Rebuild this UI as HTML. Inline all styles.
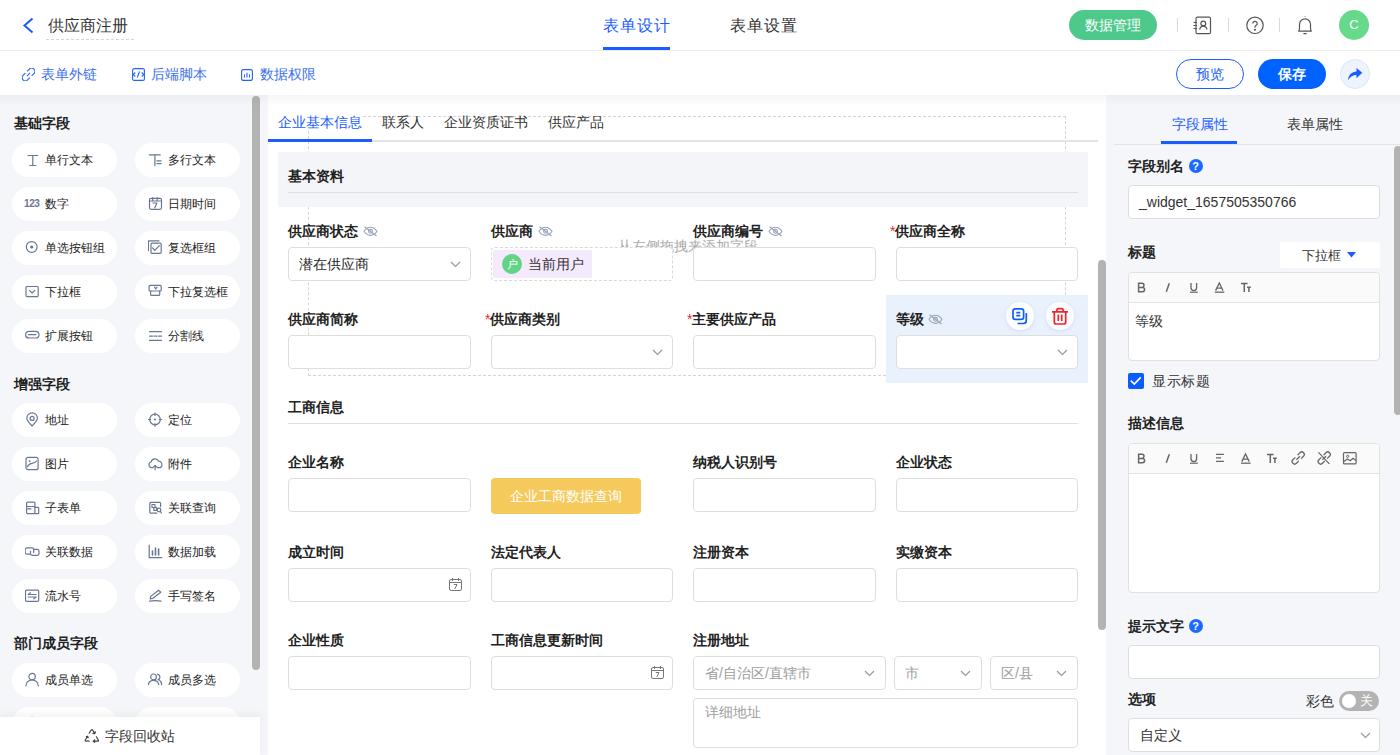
<!DOCTYPE html>
<html><head><meta charset="utf-8">
<style>
*{box-sizing:border-box;margin:0;padding:0}
html,body{width:1400px;height:755px;overflow:hidden;background:#fff;font-family:"Liberation Sans",sans-serif;color:#333;font-size:14px}
.a{position:absolute}
svg{display:block}
/* header */
#hdr{position:absolute;left:0;top:0;width:1400px;height:51px;background:#fff;border-bottom:1px solid #ececec}
#bar{position:absolute;left:0;top:51px;width:1400px;height:44px;background:#fff}
#shadow{position:absolute;left:0;top:95px;width:1400px;height:11px;background:linear-gradient(rgba(0,0,0,0.035),rgba(0,0,0,0));z-index:5}
.tl{font-size:16px;line-height:16px;white-space:nowrap}
.bl{color:#3a6ff0}
/* left */
#left{position:absolute;left:0;top:95px;width:268px;height:660px;background:#f5f6fa}
.h{position:absolute;left:14px;font-size:14px;font-weight:bold;color:#1f1f1f;line-height:14px}
.chip{position:absolute;width:105px;height:34px;border-radius:17px;background:#fff;font-size:12px;color:#222;line-height:35px;padding-left:33px;white-space:nowrap}
.chip svg{position:absolute;left:13px;top:9px}
/* center */
#center{position:absolute;left:268px;top:95px;width:838px;height:660px;background:#fff}
.lab{position:absolute;font-size:14px;font-weight:bold;color:#222;line-height:14px;white-space:nowrap}
.req{color:#f5222d;font-weight:normal}
.inp{position:absolute;height:34px;border:1px solid #dedede;border-radius:4px;background:#fff}
.ph{position:absolute;font-size:14px;color:#9d9d9d;line-height:14px;white-space:nowrap}
/* right */
#right{position:absolute;left:1106px;top:95px;width:294px;height:660px;background:#f5f6fa}
.sb{position:absolute;width:8px;border-radius:4px;background:#b3b3b3}
</style></head>
<body>
<div id="hdr">
  <svg class="a" style="left:22px;top:17px" width="13" height="17" viewBox="0 0 13 17"><path d="M10.5 1.5 L2.5 8.5 L10.5 15.5" fill="none" stroke="#1a5cff" stroke-width="2"/></svg>
  <div class="a tl" style="left:48px;top:18px;color:#333">供应商注册</div>
  <div class="a" style="left:46px;top:39px;width:88px;border-top:1px dashed #d6d6d6"></div>
  <div class="a tl" style="left:603px;top:18px;letter-spacing:1px;color:#1a5cff">表单设计</div>
  <div class="a" style="left:603px;top:47px;width:67px;height:3px;background:#1a5cff"></div>
  <div class="a tl" style="left:730px;top:18px;letter-spacing:1px;color:#333">表单设置</div>
  <div class="a" style="left:1069px;top:10px;width:88px;height:30px;border-radius:15px;background:#4cc98b;color:#fff;font-size:14px;line-height:30px;text-align:center">数据管理</div>
  <div class="a" style="left:1177px;top:18px;width:1px;height:14px;background:#d9d9d9"></div>
  <div class="a" style="left:1228px;top:18px;width:1px;height:14px;background:#d9d9d9"></div>
  <div class="a" style="left:1279px;top:18px;width:1px;height:14px;background:#d9d9d9"></div>
  
  <svg class="a" style="left:1192px;top:16px" width="20" height="19" viewBox="0 0 20 19" fill="none" stroke="#555" stroke-width="1.2"><rect x="4" y="1.2" width="14.5" height="16.5" rx="1.5"/><path d="M1.5 6.5h3.5M1.5 9.5h3.5M1.5 12.5h3.5"/><circle cx="11.3" cy="7.5" r="2.4"/><path d="M7.6 13.5c.5-2.2 1.8-3.4 3.7-3.4s3.2 1.2 3.7 3.4"/></svg>
  <svg class="a" style="left:1245px;top:16px" width="20" height="19" viewBox="0 0 20 19" fill="none" stroke="#555" stroke-width="1.2"><circle cx="10" cy="9.3" r="8.2"/><path d="M7.8 7.5a2.2 2.2 0 1 1 3.1 2c-.6.3-.9.8-.9 1.5v.7"/><circle cx="10" cy="13.8" r=".45" fill="#555"/></svg>
  <svg class="a" style="left:1296px;top:16px" width="18" height="20" viewBox="0 0 18 20" fill="none" stroke="#555" stroke-width="1.2"><path d="M9 0.6v.4M2.2 15.2h13.6M2.5 15.2c.8-.6 1-1.5 1-3V8.2a5.5 5.3 0 0 1 11 0v4c0 1.5.2 2.4 1 3M7.4 17.6h3.2"/></svg>
  <div class="a" style="left:1339px;top:10px;width:30px;height:30px;border-radius:15px;background:#66d98a;color:#fff;font-size:13px;line-height:30px;text-align:center">C</div>
</div>
<div id="bar">

  <svg class="a" style="left:22px;top:67.5px;top:16.5px" width="13" height="13" viewBox="0 0 13 13" fill="none" stroke="#2563f6" stroke-width="1.1"><g transform="rotate(-45 6.5 6.5)"><path d="M5.3 3.3H2a3.2 3.2 0 0 0 0 6.4h3.3M7.7 3.3H11a3.2 3.2 0 0 1 0 6.4H7.7M4.3 6.5h4.4"/></g></svg>
  <svg class="a" style="left:132px;top:17px" width="13" height="13" viewBox="0 0 13 13" fill="none" stroke="#2563f6" stroke-width="1.1"><rect x="0.6" y="0.6" width="11.8" height="11.8" rx="1.5"/><path d="M3.3 4.5L1.2 6.5 3.3 8.5M9.7 4.5l2.1 2-2.1 2M7.5 3.5L5.3 9.5"/></svg>
  <svg class="a" style="left:241px;top:18px" width="12" height="12" viewBox="0 0 12 12" fill="none" stroke="#2563f6" stroke-width="1.1"><rect x="0.6" y="0.6" width="10.8" height="10.8" rx="2"/><path d="M3.5 5.5v3M6 3.8v4.7M8.5 5.5v3"/></svg>
  <div class="a bl" style="left:41px;top:16px;font-size:14px;line-height:14px">表单外链</div>
  <div class="a bl" style="left:151px;top:16px;font-size:14px;line-height:14px">后端脚本</div>
  <div class="a bl" style="left:260px;top:16px;font-size:14px;line-height:14px">数据权限</div>
  <div class="a" style="left:1176px;top:8px;width:68px;height:30px;border-radius:15px;border:1px solid #1a5cff;color:#1a5cff;font-size:14px;line-height:28px;text-align:center">预览</div>
  <div class="a" style="left:1258px;top:8px;width:68px;height:30px;border-radius:15px;background:#0062ff;color:#fff;font-size:14px;line-height:30px;text-align:center;font-weight:bold">保存</div>
  <div class="a" style="left:1340px;top:8px;width:30px;height:30px;border-radius:15px;background:#eef4ff;border:1px solid #dbe6fc"><svg class="a" style="left:6px;top:6.6px" width="16" height="14" viewBox="0 0 16 14"><path d="M1 13.2C1.6 7.5 4.8 5 9.5 4.6V1L15.3 5.8 9.5 11.2V8C6 8 3.3 9.5 1 13.2Z" fill="#1a5cff"/></svg></div>
</div>

<div id="left">
<div class="h" style="top:21px">基础字段</div>
<div class="chip" style="left:12px;top:48px"><svg width="16" height="16" viewBox="0 0 16 16" fill="none" stroke="#6a7793" stroke-width="1.2" stroke-linecap="round" stroke-linejoin="round"><path d="M3 3.5h9.8M7.8 3.5v10M4.9 13.5h6"/></svg>单行文本</div>
<div class="chip" style="left:135px;top:48px"><svg width="16" height="16" viewBox="0 0 16 16" fill="none" stroke="#6a7793" stroke-width="1.2" stroke-linecap="round" stroke-linejoin="round"><path d="M1.3 2.8h11M6.9 2.8v11M8.9 8.9h4.2M8.9 11.6h4.2"/></svg>多行文本</div>
<div class="chip" style="left:12px;top:92px"><span style="position:absolute;left:12px;top:-1px;font-size:10px;font-weight:bold;color:#6a7793;letter-spacing:-0.4px">123</span>数字</div>
<div class="chip" style="left:135px;top:92px"><svg width="16" height="16" viewBox="0 0 16 16" fill="none" stroke="#6a7793" stroke-width="1.2" stroke-linecap="round" stroke-linejoin="round"><rect x="1.5" y="2.4" width="12" height="10.9" rx="1.5"/><path d="M1.5 5h12M4.7 1.5v3M9.2 1.5v3M4.9 7h4L6.7 12"/></svg>日期时间</div>
<div class="chip" style="left:12px;top:136px"><svg width="16" height="16" viewBox="0 0 16 16" fill="none" stroke="#6a7793" stroke-width="1.2" stroke-linecap="round" stroke-linejoin="round"><circle cx="6.7" cy="7" r="5.4"/><circle cx="6.7" cy="7" r="1.6" fill="#6a7793" stroke="none"/></svg>单选按钮组</div>
<div class="chip" style="left:135px;top:136px"><svg width="16" height="16" viewBox="0 0 16 16" fill="none" stroke="#6a7793" stroke-width="1.2" stroke-linecap="round" stroke-linejoin="round"><path d="M0.4 10.7V0.9h10.6"/><rect x="3" y="3.2" width="10.2" height="10.2" rx="1.2"/><path d="M4.6 8l2.3 2.3 4.4-4.6"/></svg>复选框组</div>
<div class="chip" style="left:12px;top:180px"><svg width="16" height="16" viewBox="0 0 16 16" fill="none" stroke="#6a7793" stroke-width="1.2" stroke-linecap="round" stroke-linejoin="round"><rect x="1" y="2.5" width="12.2" height="10.1" rx="1"/><path d="M4.4 6.3l2.7 2.7 2.7-2.7"/></svg>下拉框</div>
<div class="chip" style="left:135px;top:180px"><svg width="16" height="16" viewBox="0 0 16 16" fill="none" stroke="#6a7793" stroke-width="1.2" stroke-linecap="round" stroke-linejoin="round"><rect x="1.1" y="1.4" width="12.1" height="5.6" rx="1"/><path d="M2.6 7v3.4a1 1 0 0 0 1 1h7.1a1 1 0 0 0 1-1V7M6.6 3.2l1.2 1.6 1.2-1.6"/></svg>下拉复选框</div>
<div class="chip" style="left:12px;top:224px"><svg width="16" height="16" viewBox="0 0 16 16" fill="none" stroke="#6a7793" stroke-width="1.2" stroke-linecap="round" stroke-linejoin="round"><rect x="0.6" y="3.3" width="13.4" height="6.7" rx="3.35"/><path d="M3.5 6.65h7.2"/></svg>扩展按钮</div>
<div class="chip" style="left:135px;top:224px"><svg width="16" height="16" viewBox="0 0 16 16" fill="none" stroke="#6a7793" stroke-width="1.2" stroke-linecap="round" stroke-linejoin="round"><path d="M1.5 3.7h12M1.5 8.1h3M6 8.1h3M10.5 8.1h3M1.5 12.4h12"/></svg>分割线</div>
<div class="h" style="top:282px">增强字段</div>
<div class="chip" style="left:12px;top:308px"><svg width="16" height="16" viewBox="0 0 16 16" fill="none" stroke="#6a7793" stroke-width="1.2" stroke-linecap="round" stroke-linejoin="round"><path d="M7.1 14C3.6 10.6 1.8 8.2 1.8 6.1a5.3 5.3 0 0 1 10.6 0c0 2.1-1.8 4.5-5.3 7.9z"/><circle cx="7.1" cy="6.4" r="2"/></svg>地址</div>
<div class="chip" style="left:135px;top:308px"><svg width="16" height="16" viewBox="0 0 16 16" fill="none" stroke="#6a7793" stroke-width="1.2" stroke-linecap="round" stroke-linejoin="round"><circle cx="7" cy="7.5" r="5.3"/><circle cx="7" cy="7.5" r="1.1" fill="#6a7793" stroke="none"/><path d="M7 0.9v2.6M7 11.6v2.6M0.3 7.5h2.4M11.3 7.5h2.5"/></svg>定位</div>
<div class="chip" style="left:12px;top:352px"><svg width="16" height="16" viewBox="0 0 16 16" fill="none" stroke="#6a7793" stroke-width="1.2" stroke-linecap="round" stroke-linejoin="round"><rect x="1" y="1.4" width="12.1" height="12.3" rx="2"/><circle cx="4.6" cy="5.2" r="0.9" fill="#6a7793" stroke="none"/><path d="M2.3 10.8c1.2-2.5 2.6-3.3 4.6-3.5s3.6-.6 4.7-2.3"/></svg>图片</div>
<div class="chip" style="left:135px;top:352px"><svg width="16" height="16" viewBox="0 0 16 16" fill="none" stroke="#6a7793" stroke-width="1.2" stroke-linecap="round" stroke-linejoin="round"><path d="M4.8 11.7H3.6A2.9 2.9 0 0 1 3.2 6 3.9 3.9 0 0 1 10.6 5.2 3.2 3.2 0 0 1 10.7 11.7H9.4M7.1 13.7V9.3M5.3 11.1l1.8-1.8 1.8 1.8"/></svg>附件</div>
<div class="chip" style="left:12px;top:396px"><svg width="16" height="16" viewBox="0 0 16 16" fill="none" stroke="#6a7793" stroke-width="1.2" stroke-linecap="round" stroke-linejoin="round"><rect x="1.6" y="2.1" width="8.3" height="11.5" rx="1"/><path d="M1.6 6.5h8.3M2.6 8.9h3.4M9.9 7.3h3.2a.6.6 0 0 1 .6.6v5.1a.6.6 0 0 1-.6.6H9.9"/></svg>子表单</div>
<div class="chip" style="left:135px;top:396px"><svg width="16" height="16" viewBox="0 0 16 16" fill="none" stroke="#6a7793" stroke-width="1.2" stroke-linecap="round" stroke-linejoin="round"><path d="M12.6 6.6V3.4a1 1 0 0 0-1-1H2.8a1 1 0 0 0-1 1v8.8a1 1 0 0 0 1 1h6"/><rect x="4" y="4.5" width="3" height="3"/><rect x="5.8" y="7.5" width="2.8" height="2.8"/><circle cx="11" cy="10" r="1.8"/><path d="M12.3 11.3l1.2 1.7"/></svg>关联查询</div>
<div class="chip" style="left:12px;top:440px"><svg width="16" height="16" viewBox="0 0 16 16" fill="none" stroke="#6a7793" stroke-width="1.2" stroke-linecap="round" stroke-linejoin="round"><path d="M5.2 10.2H2a1.8 1.8 0 0 1-1.8-1.8V5.6A1.8 1.8 0 0 1 2 3.8h4.9a1.8 1.8 0 0 1 1.8 1.8V8.4"/><path d="M5.5 7.2v2.4a1.8 1.8 0 0 0 1.8 1.8h4.9A1.8 1.8 0 0 0 14 9.6V7.1a1.8 1.8 0 0 0-1.8-1.8H9"/></svg>关联数据</div>
<div class="chip" style="left:135px;top:440px"><svg width="16" height="16" viewBox="0 0 16 16" fill="none" stroke="#6a7793" stroke-width="1.2" stroke-linecap="round" stroke-linejoin="round"><path d="M1.2 1.2v12.5h12.6"/><path d="M4.5 7v4M7.5 4v7M10.6 5v6" stroke-width="1.6"/></svg>数据加载</div>
<div class="chip" style="left:12px;top:484px"><svg width="16" height="16" viewBox="0 0 16 16" fill="none" stroke="#6a7793" stroke-width="1.2" stroke-linecap="round" stroke-linejoin="round"><rect x="0.5" y="2.2" width="13.2" height="11.1" rx="1"/><path d="M3.2 6.5h7.8M3.2 6.5l2.2-1.8M3.2 9h7.8M11 9l-2.2 1.8"/></svg>流水号</div>
<div class="chip" style="left:135px;top:484px"><svg width="16" height="16" viewBox="0 0 16 16" fill="none" stroke="#6a7793" stroke-width="1.2" stroke-linecap="round" stroke-linejoin="round"><path d="M2.2 10.8l.5-2.4 7.9-6.1 2.2 1.9-7.9 6.1z"/><path d="M1.5 13.1c4-0.7 7.5-0.7 11.5 0"/></svg>手写签名</div>
<div class="h" style="top:541px">部门成员字段</div>
<div class="chip" style="left:12px;top:568px"><svg width="16" height="16" viewBox="0 0 16 16" fill="none" stroke="#6a7793" stroke-width="1.2" stroke-linecap="round" stroke-linejoin="round"><circle cx="7.1" cy="4.6" r="3.2"/><path d="M0.9 13.9a6.2 6 0 0 1 12.4 0"/></svg>成员单选</div>
<div class="chip" style="left:135px;top:568px"><svg width="16" height="16" viewBox="0 0 16 16" fill="none" stroke="#6a7793" stroke-width="1.2" stroke-linecap="round" stroke-linejoin="round"><circle cx="5.5" cy="4.9" r="2.9"/><path d="M0.3 12.6a5.3 5 0 0 1 10.5 0M9.4 2.1a2.9 2.9 0 0 1 .6 5.6M11.2 7.9a5.3 5.2 0 0 1 2.4 4.7"/></svg>成员多选</div>
<div class="chip" style="left:12px;top:612px"><svg width="16" height="16" viewBox="0 0 16 16" fill="none" stroke="#6a7793" stroke-width="1.2" stroke-linecap="round" stroke-linejoin="round"><circle cx="7.1" cy="4.6" r="3.2"/><path d="M0.9 13.9a6.2 6 0 0 1 12.4 0"/></svg></div>
<div class="chip" style="left:135px;top:612px"><svg width="16" height="16" viewBox="0 0 16 16" fill="none" stroke="#6a7793" stroke-width="1.2" stroke-linecap="round" stroke-linejoin="round"><circle cx="5.5" cy="4.9" r="2.9"/><path d="M0.3 12.6a5.3 5 0 0 1 10.5 0M9.4 2.1a2.9 2.9 0 0 1 .6 5.6M11.2 7.9a5.3 5.2 0 0 1 2.4 4.7"/></svg></div>
<div class="sb" style="left:252px;top:1px;height:574px"></div>
<div class="a" style="left:0;top:622px;width:260px;height:38px;background:#fff;box-shadow:0 -3px 8px rgba(0,0,0,0.05)"><svg class="a" style="left:84px;top:11.5px" width="16" height="15" viewBox="0 0 16 15" fill="none" stroke="#444" stroke-width="1.2" stroke-linecap="round" stroke-linejoin="round"><path d="M5.2 4.2L7 1.3Q7.9 0 8.8 1.3L10.8 4.6M8.9 4.4l1.9.2.6-1.8"/><path d="M3.6 7.2L1.3 11Q0.8 12.2 2.2 12.2H5.2M2.3 7.6l1.3-.4.6 1.6"/><path d="M9.2 12.2h4.4q1.4 0 .7-1.2L12.4 7.8M10.7 10.9l-1.5 1.3 1.5 1.2"/></svg><div class="a" style="left:105px;top:12px;font-size:14px;line-height:14px;color:#333">字段回收站</div></div>
</div>
<div id="center">
<div class="a" style="left:40px;top:21px;width:758px;height:260px;border:1px dashed #d4d4d4;pointer-events:none"></div>
<div class="a" style="left:10px;top:20px;font-size:14px;line-height:15px;background:#fff;color:#1a5cff">企业基本信息</div>
<div class="a" style="left:114px;top:20px;font-size:14px;line-height:15px;color:#333">联系人</div>
<div class="a" style="left:176px;top:20px;font-size:14px;line-height:15px;color:#333">企业资质证书</div>
<div class="a" style="left:280px;top:20px;font-size:14px;line-height:15px;color:#333">供应产品</div>
<div class="a" style="left:0;top:45px;width:830px;height:2px;background:#e3e3e3"></div>
<div class="a" style="left:0;top:44px;width:104px;height:3px;background:#1a5cff"></div>
<div class="a" style="left:10px;top:57px;width:810px;height:55px;background:#f3f5f9"></div>
<div class="a lab" style="left:20px;top:74px">基本资料</div>
<div class="a" style="left:20px;top:97px;width:790px;height:1px;background:#e0e0e0"></div>
<div class="a" style="left:618px;top:200px;width:202px;height:88px;background:#e9f1fd"></div>
<div class="lab" style="left:20px;top:129px">供应商状态</div>
<svg class="a" style="left:95px;top:130.5px" width="15" height="11" viewBox="0 0 15 11" fill="none" stroke="#98a3b8" stroke-width="1.1"><path d="M1 5.3C3 2.3 5 1.2 7.5 1.2S12 2.3 14 5.3C12 8.3 10 9.4 7.5 9.4S3 8.3 1 5.3z"/><circle cx="7.5" cy="5.3" r="1.9"/><path d="M1.5 0.8L13.5 10"/></svg>
<div class="lab" style="left:223px;top:129px">供应商</div>
<svg class="a" style="left:270px;top:130.5px" width="15" height="11" viewBox="0 0 15 11" fill="none" stroke="#98a3b8" stroke-width="1.1"><path d="M1 5.3C3 2.3 5 1.2 7.5 1.2S12 2.3 14 5.3C12 8.3 10 9.4 7.5 9.4S3 8.3 1 5.3z"/><circle cx="7.5" cy="5.3" r="1.9"/><path d="M1.5 0.8L13.5 10"/></svg>
<div class="lab" style="left:425px;top:129px">供应商编号</div>
<svg class="a" style="left:500px;top:130.5px" width="15" height="11" viewBox="0 0 15 11" fill="none" stroke="#98a3b8" stroke-width="1.1"><path d="M1 5.3C3 2.3 5 1.2 7.5 1.2S12 2.3 14 5.3C12 8.3 10 9.4 7.5 9.4S3 8.3 1 5.3z"/><circle cx="7.5" cy="5.3" r="1.9"/><path d="M1.5 0.8L13.5 10"/></svg>
<div class="lab" style="left:622px;top:129px"><span class="req">*</span>供应商全称</div>
<div class="inp" style="left:20px;top:152px;width:183px"></div>
<div class="a" style="left:31px;top:162px;font-size:14px;line-height:14px;color:#262626">潜在供应商</div>
<svg class="a" style="left:182px;top:166px" width="11" height="7" viewBox="0 0 11 7" fill="none" stroke="#999" stroke-width="1.2"><path d="M1 1l4.5 4.5L10 1"/></svg>
<div class="a" style="left:350px;top:144px;font-size:14px;line-height:14px;color:#aaa">从左侧拖拽来添加字段</div>
<div class="a" style="left:223px;top:152px;width:182px;height:34px;border:1px dashed #d9d9d9;border-radius:4px;background:#fff"></div>
<div class="a" style="left:225px;top:155px;width:99px;height:28px;background:#f5e9fc;border-radius:2px"></div>
<div class="a" style="left:234px;top:159px;width:20px;height:20px;border-radius:10px;background:#63d487;color:#fff;font-size:11px;line-height:20px;text-align:center">户</div>
<div class="a" style="left:260px;top:162px;font-size:14px;line-height:14px;color:#333">当前用户</div>
<div class="inp" style="left:425px;top:152px;width:183px"></div>
<div class="inp" style="left:628px;top:152px;width:182px"></div>
<div class="lab" style="left:20px;top:217px">供应商简称</div>
<div class="lab" style="left:217px;top:217px"><span class="req">*</span>供应商类别</div>
<div class="lab" style="left:419px;top:217px"><span class="req">*</span>主要供应产品</div>
<div class="lab" style="left:628px;top:217px">等级</div>
<svg class="a" style="left:660px;top:218.5px" width="15" height="11" viewBox="0 0 15 11" fill="none" stroke="#98a3b8" stroke-width="1.1"><path d="M1 5.3C3 2.3 5 1.2 7.5 1.2S12 2.3 14 5.3C12 8.3 10 9.4 7.5 9.4S3 8.3 1 5.3z"/><circle cx="7.5" cy="5.3" r="1.9"/><path d="M1.5 0.8L13.5 10"/></svg>
<div class="inp" style="left:20px;top:240px;width:183px"></div>
<div class="inp" style="left:223px;top:240px;width:182px"></div>
<svg class="a" style="left:384px;top:254px" width="11" height="7" viewBox="0 0 11 7" fill="none" stroke="#999" stroke-width="1.2"><path d="M1 1l4.5 4.5L10 1"/></svg>
<div class="inp" style="left:425px;top:240px;width:183px"></div>
<div class="inp" style="left:628px;top:240px;width:182px"></div>
<svg class="a" style="left:789px;top:254px" width="11" height="7" viewBox="0 0 11 7" fill="none" stroke="#999" stroke-width="1.2"><path d="M1 1l4.5 4.5L10 1"/></svg>
<div class="a" style="left:738px;top:207px;width:28px;height:28px;border-radius:14px;background:#fff;box-shadow:0 1px 4px rgba(30,90,200,0.12)"><svg class="a" style="left:0;top:0" width="28" height="28" viewBox="0 0 28 28" fill="none" stroke="#0f5cff" stroke-width="1.7"><rect x="7" y="6.8" width="10.6" height="10.6" rx="2.2"/><path d="M10.3 10.7h4M10.3 13.7h4M20.3 11v7.5a3 3 0 0 1-3 3H11.5"/></svg></div>
<div class="a" style="left:778px;top:207px;width:28px;height:28px;border-radius:14px;background:#fff;box-shadow:0 1px 4px rgba(30,90,200,0.12)"><svg class="a" style="left:0;top:0" width="28" height="28" viewBox="0 0 28 28" fill="none" stroke="#f5222d" stroke-width="1.7"><path d="M6 9.8h16M10.8 9.5V8.2a1.5 1.5 0 0 1 1.5-1.5h3.4a1.5 1.5 0 0 1 1.5 1.5v1.3M8.3 10v10a2 2 0 0 0 2 2h7.4a2 2 0 0 0 2-2V10M12.3 12.5v6.5M15.7 12.5v6.5"/></svg></div>
<div class="lab" style="left:20px;top:305px">工商信息</div>
<div class="a" style="left:20px;top:328px;width:790px;height:1px;background:#e0e0e0"></div>
<div class="lab" style="left:20px;top:360px">企业名称</div>
<div class="lab" style="left:425px;top:360px">纳税人识别号</div>
<div class="lab" style="left:628px;top:360px">企业状态</div>
<div class="inp" style="left:20px;top:383px;width:183px"></div>
<div class="a" style="left:223px;top:383px;width:150px;height:36px;border-radius:4px;background:#f6c95c;color:#fff;font-size:14px;line-height:36px;text-align:center">企业工商数据查询</div>
<div class="inp" style="left:425px;top:383px;width:183px"></div>
<div class="inp" style="left:628px;top:383px;width:182px"></div>
<div class="lab" style="left:20px;top:450px">成立时间</div>
<div class="lab" style="left:223px;top:450px">法定代表人</div>
<div class="lab" style="left:425px;top:450px">注册资本</div>
<div class="lab" style="left:628px;top:450px">实缴资本</div>
<div class="inp" style="left:20px;top:473px;width:183px"></div>
<svg class="a" style="left:180px;top:482px" width="15" height="15" viewBox="0 0 15 15" fill="none" stroke="#777" stroke-width="1"><rect x="1.5" y="2.5" width="12" height="11" rx="1.5"/><path d="M1.5 5.5h12M4.5 1v3M10.5 1v3"/><path d="M5.8 7.5h3.2L6.8 12" stroke-width="1"/></svg>
<div class="inp" style="left:223px;top:473px;width:182px"></div>
<div class="inp" style="left:425px;top:473px;width:183px"></div>
<div class="inp" style="left:628px;top:473px;width:182px"></div>
<div class="lab" style="left:20px;top:538px">企业性质</div>
<div class="lab" style="left:223px;top:538px">工商信息更新时间</div>
<div class="lab" style="left:425px;top:538px">注册地址</div>
<div class="inp" style="left:20px;top:561px;width:183px"></div>
<div class="inp" style="left:223px;top:561px;width:182px"></div>
<svg class="a" style="left:382px;top:570px" width="15" height="15" viewBox="0 0 15 15" fill="none" stroke="#777" stroke-width="1"><rect x="1.5" y="2.5" width="12" height="11" rx="1.5"/><path d="M1.5 5.5h12M4.5 1v3M10.5 1v3"/><path d="M5.8 7.5h3.2L6.8 12" stroke-width="1"/></svg>
<div class="inp" style="left:425px;top:561px;width:193px"></div>
<div class="ph" style="left:437px;top:571px">省/自治区/直辖市</div>
<svg class="a" style="left:596px;top:575px" width="11" height="7" viewBox="0 0 11 7" fill="none" stroke="#999" stroke-width="1.2"><path d="M1 1l4.5 4.5L10 1"/></svg>
<div class="inp" style="left:626px;top:561px;width:88px"></div>
<div class="ph" style="left:637px;top:571px">市</div>
<svg class="a" style="left:692px;top:575px" width="11" height="7" viewBox="0 0 11 7" fill="none" stroke="#999" stroke-width="1.2"><path d="M1 1l4.5 4.5L10 1"/></svg>
<div class="inp" style="left:722px;top:561px;width:88px"></div>
<div class="ph" style="left:733px;top:571px">区/县</div>
<svg class="a" style="left:788px;top:575px" width="11" height="7" viewBox="0 0 11 7" fill="none" stroke="#999" stroke-width="1.2"><path d="M1 1l4.5 4.5L10 1"/></svg>
<div class="inp" style="left:425px;top:603px;width:385px;height:50px"></div>
<div class="ph" style="left:437px;top:610px">详细地址</div>
<div class="sb" style="left:830px;top:165px;height:370px"></div>
</div>
<div id="right">
<div class="a" style="left:66px;top:22px;font-size:14px;line-height:14px;color:#1a5cff">字段属性</div>
<div class="a" style="left:181px;top:22px;font-size:14px;line-height:14px;color:#333">表单属性</div>
<div class="a" style="left:8px;top:49px;width:290px;height:1px;background:#e3e3e3"></div>
<div class="a" style="left:55px;top:46px;width:76px;height:3px;background:#1a5cff"></div>
<div class="lab" style="left:22px;top:64px">字段别名</div>
<div class="a" style="left:82.5px;top:64px;width:14px;height:14px;border-radius:7px;background:#1a6aff;color:#fff;font-size:11px;font-weight:bold;line-height:14px;text-align:center">?</div>
<div class="inp" style="left:22px;top:90px;width:252px;height:34px"></div>
<div class="a" style="left:33px;top:100px;font-size:14px;line-height:14px;color:#333">_widget_1657505350766</div>
<div class="lab" style="left:22px;top:150px">标题</div>
<div class="a" style="left:174px;top:147px;width:100px;height:26px;background:#fff;border-radius:2px"></div>
<div class="a" style="left:196px;top:154px;font-size:13px;line-height:13px;color:#333">下拉框</div>
<svg class="a" style="left:241px;top:157px" width="9" height="6" viewBox="0 0 9 6"><path d="M0 0h9L4.5 5.5z" fill="#1a5cff"/></svg>
<div class="a" style="left:22px;top:176.5px;width:252px;height:89.0px;border:1px solid #e0e0e0;border-radius:4px;background:#fff;overflow:hidden"><div style="height:30.0px;background:#fafafb;border-bottom:1px solid #e3e3e3"></div></div>
<svg class="a" style="left:30px;top:185px" width="120" height="14" viewBox="0 0 120 14" fill="none" stroke="#666"><path d="M2.6 3.2h3.3a2.1 2.1 0 0 1 0 4.2H2.6zM2.6 7.4h3.8a2.2 2.2 0 0 1 0 4.4H2.6z" stroke-width="1.5"/><path d="M33.3 3.2L30.3 11.8" stroke-width="1.5"/><path d="M55 3v4.8a2.8 2.8 0 0 0 5.6 0V3" stroke-width="1.3"/><path d="M54 12.2h7.8" stroke-width="1.2"/><path d="M79.6 10.6l3.7-7.6 3.7 7.6M80.8 8.2h5" stroke-width="1.3"/><path d="M78.8 12.2h9.6" stroke-width="1.3"/><path d="M105 3.4h6.6M108.3 3.4v8.5M111 7.3h3.8M112.9 7.3v4.6" stroke-width="1.5"/></svg>
<div class="a" style="left:29px;top:219px;font-size:14px;line-height:14px;color:#333">等级</div>
<div class="a" style="left:22px;top:278px;width:16px;height:16px;border-radius:2px;background:#0a5cff"><svg class="a" style="left:0;top:0" width="16" height="16" viewBox="0 0 16 16" fill="none" stroke="#fff" stroke-width="1.7"><path d="M2.8 7.6l3.5 3.4 6.4-6.6"/></svg></div>
<div class="a" style="left:46px;top:279px;font-size:14px;line-height:14px;color:#333;letter-spacing:0.6px">显示标题</div>
<div class="lab" style="left:22px;top:320.5px">描述信息</div>
<div class="a" style="left:22px;top:347.5px;width:252px;height:150.5px;border:1px solid #e0e0e0;border-radius:4px;background:#fff;overflow:hidden"><div style="height:30.0px;background:#fafafb;border-bottom:1px solid #e3e3e3"></div></div>
<svg class="a" style="left:30px;top:356px" width="225" height="14" viewBox="0 0 225 14" fill="none" stroke="#666"><path d="M2.6 3.2h3.3a2.1 2.1 0 0 1 0 4.2H2.6zM2.6 7.4h3.8a2.2 2.2 0 0 1 0 4.4H2.6z" stroke-width="1.5"/><path d="M33.3 3.2L30.3 11.8" stroke-width="1.5"/><path d="M55 3v4.8a2.8 2.8 0 0 0 5.6 0V3" stroke-width="1.3"/><path d="M54 12.2h7.8" stroke-width="1.2"/><path d="M80 3.4h7.9M80 6.9h5M80 10.3h7.9" stroke-width="1.3"/><path d="M105.8 10.6l3.7-7.6 3.7 7.6M107 8.2h5" stroke-width="1.3"/><path d="M105 12.2h9.6" stroke-width="1.3"/><path d="M131 3.4h6.6M134.3 3.4v8.5M137 7.3h3.8M138.9 7.3v4.6" stroke-width="1.5"/><g transform="rotate(-45 162.2 7)"><path d="M160.6 4.5h-3.4a2.5 2.5 0 0 0 0 5h3.4M163.79999999999998 4.5h3.4a2.5 2.5 0 0 1 0 5h-3.4M159.7 7h5" stroke-width="1.3"/></g><g transform="rotate(-45 188.2 7)"><path d="M186.6 4.5h-3.4a2.5 2.5 0 0 0 0 5h3.4M189.79999999999998 4.5h3.4a2.5 2.5 0 0 1 0 5h-3.4M185.7 7h5" stroke-width="1.3"/></g><path d="M182.5 1.3l10.8 11.6" stroke-width="1.2"/><rect x="207.5" y="1.6" width="12.6" height="11.3" rx="1" stroke-width="1.2"/><circle cx="211.7" cy="5.3" r="1.1" stroke-width="1"/><path d="M207.8 10.5l3.6-2.6 2.8 1.8 2.8-2.5 3 2.4" stroke-width="1.2"/></svg>
<div class="lab" style="left:22px;top:524px">提示文字</div>
<div class="a" style="left:82.5px;top:524px;width:14px;height:14px;border-radius:7px;background:#1a6aff;color:#fff;font-size:11px;font-weight:bold;line-height:14px;text-align:center">?</div>
<div class="inp" style="left:22px;top:550px;width:252px;height:34px"></div>
<div class="lab" style="left:22px;top:597px">选项</div>
<div class="a" style="left:200px;top:599px;font-size:14px;line-height:14px;color:#333">彩色</div>
<div class="a" style="left:233px;top:596px;width:40px;height:20px;border-radius:10px;background:#b3b3b3"><div class="a" style="left:3px;top:3px;width:14px;height:14px;border-radius:7px;background:#fff"></div><div class="a" style="left:20.5px;top:3px;font-size:13px;line-height:13px;color:#fff">关</div></div>
<div class="inp" style="left:22px;top:623px;width:252px;height:34px"></div>
<div class="a" style="left:34px;top:633px;font-size:14px;line-height:14px;color:#333">自定义</div>
<svg class="a" style="left:253.5px;top:637px" width="11" height="7" viewBox="0 0 11 7" fill="none" stroke="#999" stroke-width="1.2"><path d="M1 1l4.5 4.5L10 1"/></svg>
<div class="sb" style="left:288px;top:51px;height:269px"></div>
</div>
<div id="shadow"></div>
</body></html>
